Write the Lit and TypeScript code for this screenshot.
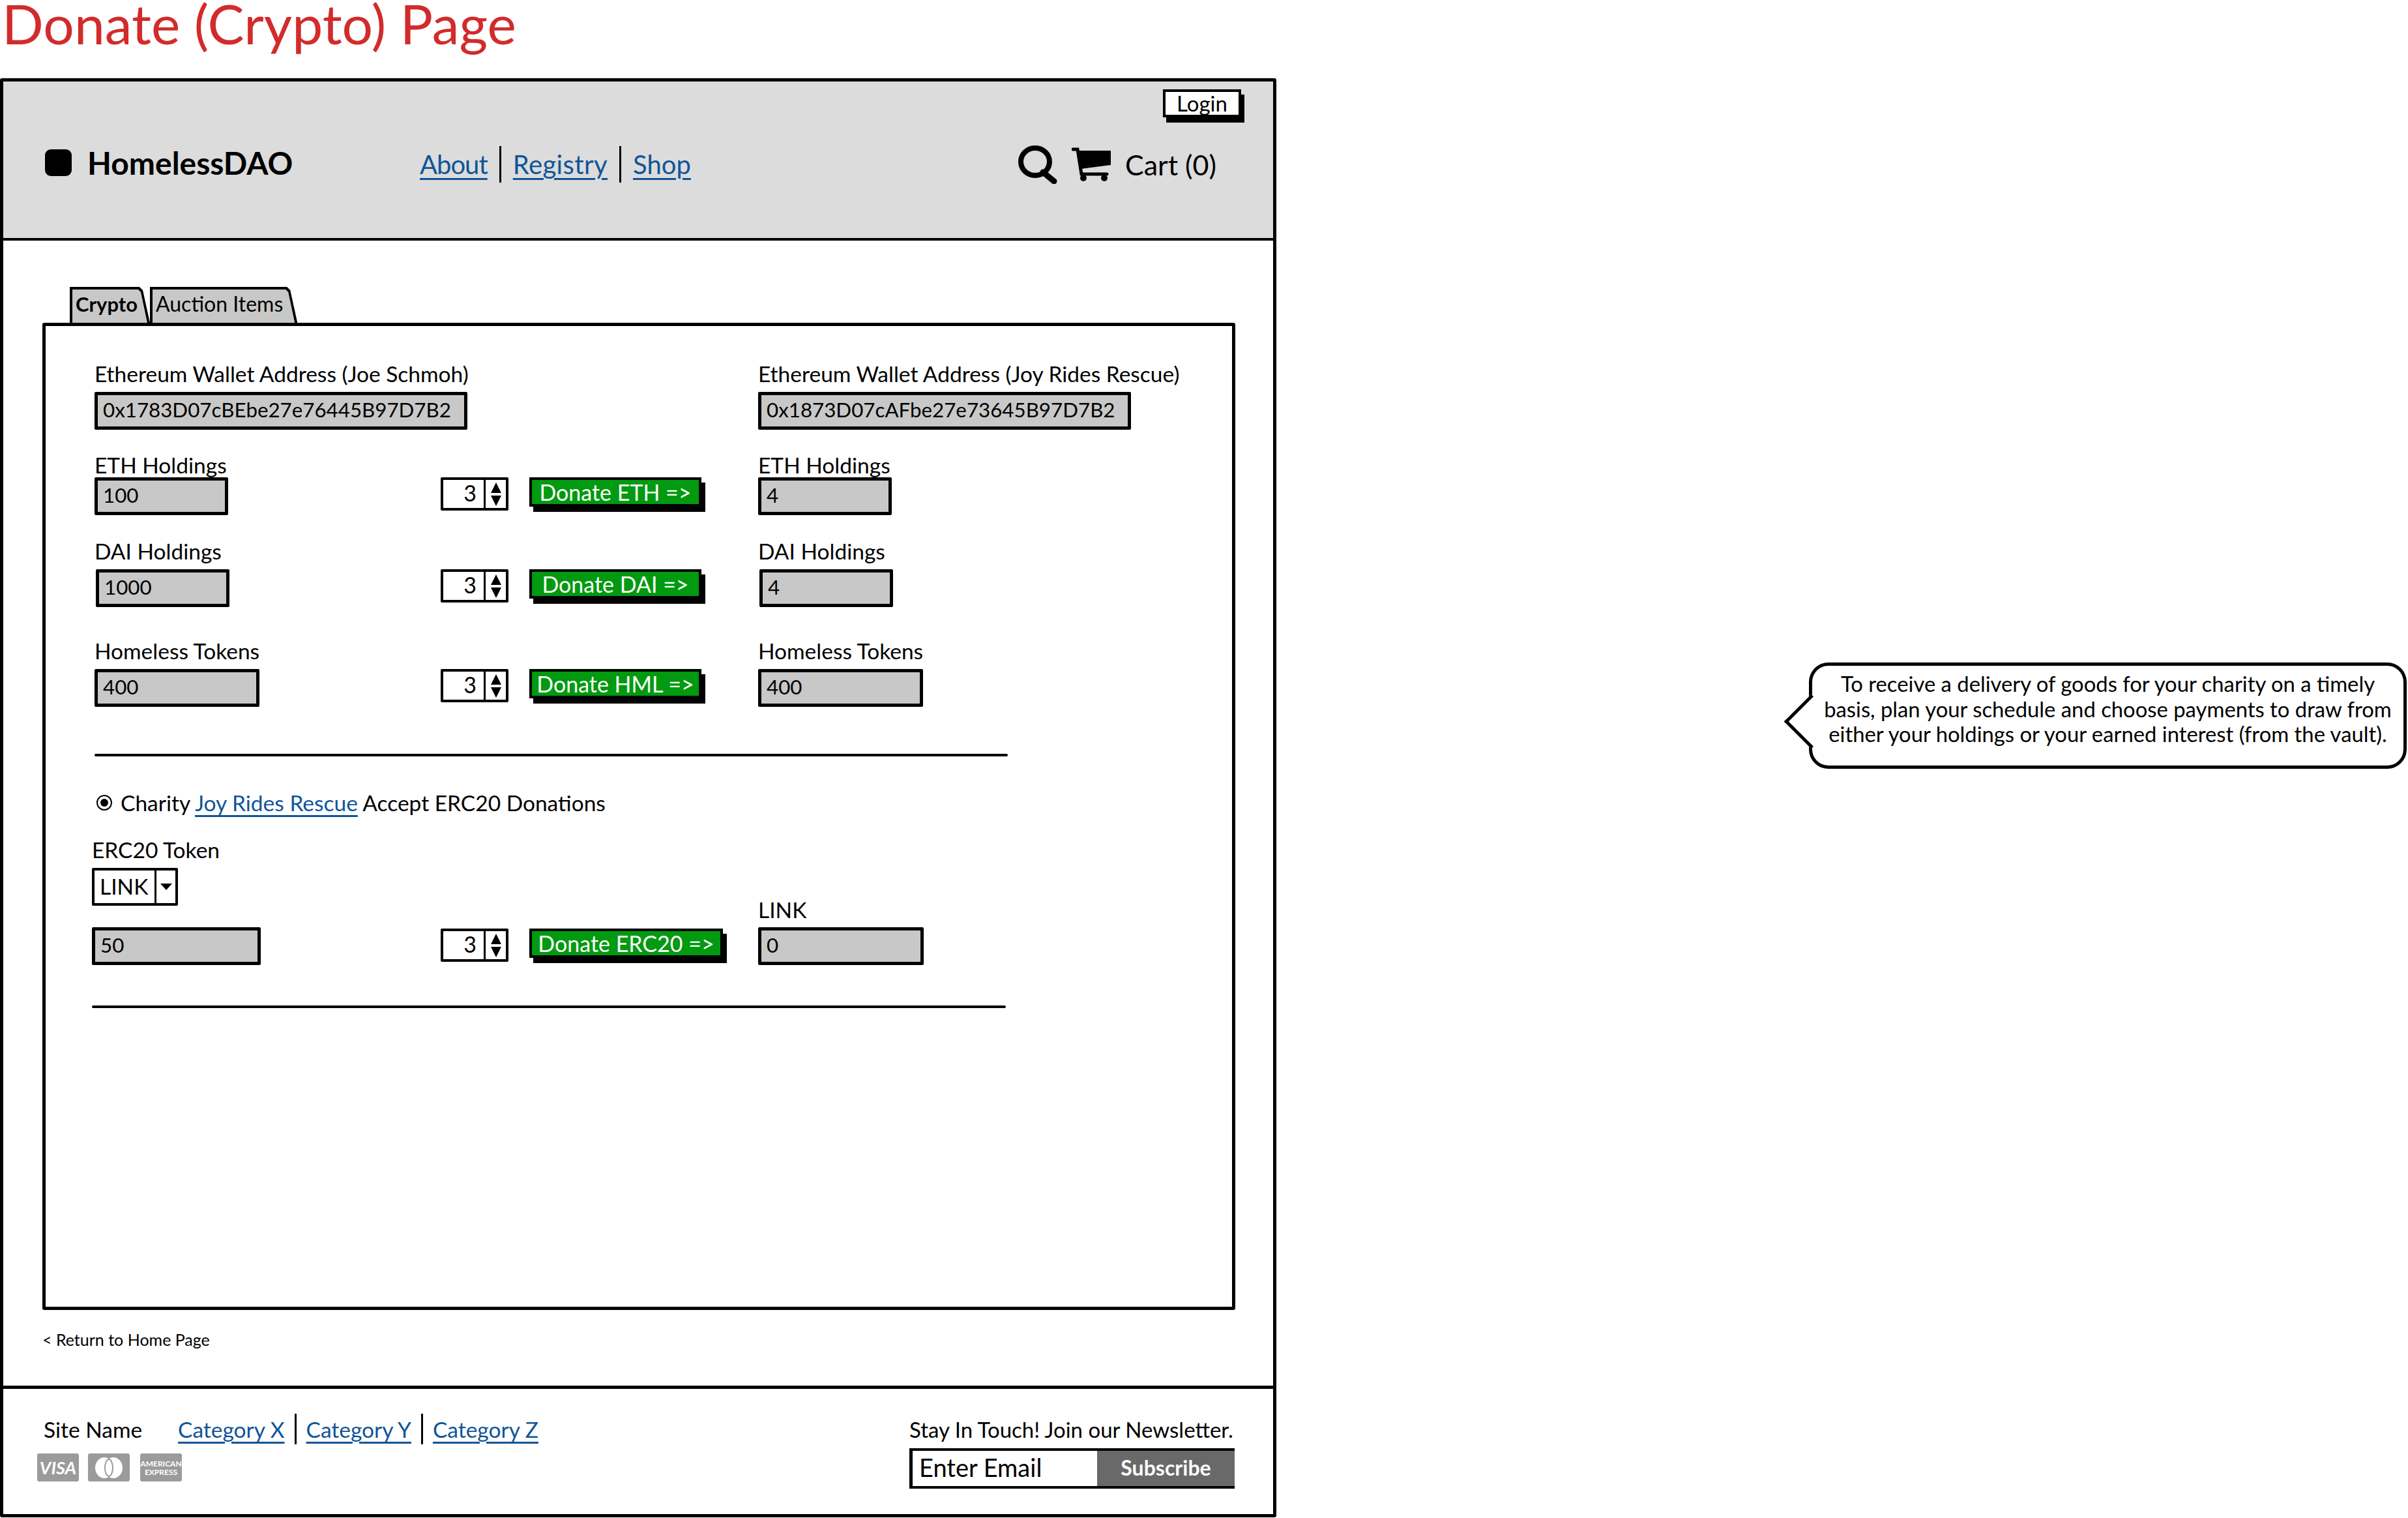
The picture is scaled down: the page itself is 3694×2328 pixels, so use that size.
import { css, html, LitElement } from "lit";
import { customElement } from "lit/decorators.js";

type Row = {
  label: string;
  value: string;
  width: number;
  shift?: number;
  button: string;
  buttonWidth: number;
  right: string;
  rightValue: string;
  tight?: boolean;
};

const ROWS: Row[] = [
  { label: "ETH Holdings", value: "100", width: 205, button: "Donate ETH =>", buttonWidth: 264, right: "ETH Holdings", rightValue: "4", tight: true },
  { label: "DAI Holdings", value: "1000", width: 205, shift: 2, button: "Donate DAI =>", buttonWidth: 264, right: "DAI Holdings", rightValue: "4" },
  { label: "Homeless Tokens", value: "400", width: 253, button: "Donate HML =>", buttonWidth: 264, right: "Homeless Tokens", rightValue: "400" },
];

@customElement("app-root")
export class AppRoot extends LitElement {
  static styles = css`
    :host {
      display: block;
      width: 3694px;
      height: 2328px;
      background: #fff;
      color: #000;
      font-family: Lato, "Liberation Sans", sans-serif;
      font-size: 33.5px;
    }
    * {
      box-sizing: border-box;
    }
    a {
      color: #0f5598;
      text-decoration: underline;
      text-decoration-thickness: 3px;
      text-underline-offset: 6px;
    }

    .title {
      margin: 0;
      height: 120px;
      padding-left: 3px;
      font-size: 84px;
      font-weight: 400;
      line-height: 72px;
      color: #d22b2b;
    }
    .stage {
      display: flex;
      align-items: flex-start;
    }
    .frame {
      display: flex;
      flex-direction: column;
      width: 1958px;
      height: 2207px;
      border: 5px solid #000;
      border-radius: 3px;
    }

    /* header */
    .header {
      display: flex;
      flex-direction: column;
      height: 244px;
      background: #dcdcdc;
      border-bottom: 4px solid #000;
    }
    .login {
      align-self: flex-end;
      width: 120px;
      height: 43px;
      margin: 12px 49px 0 0;
      border: 4px solid #000;
      background: #fff;
      box-shadow: 5px 8px 0 #000;
      font-size: 33px;
      line-height: 35px;
      text-align: center;
    }
    .bar {
      display: flex;
      align-items: center;
      height: 100px;
      margin-top: 22px;
      padding: 0 87px 0 64px;
    }
    .brand {
      display: flex;
      align-items: center;
      gap: 24px;
      width: 575px;
      margin-bottom: 6px;
      font-size: 48px;
      font-weight: 700;
    }
    .logo {
      width: 41px;
      height: 41px;
      border-radius: 9px;
      background: #000;
    }
    .nav {
      display: flex;
      align-items: center;
      gap: 18px;
      font-size: 40px;
    }
    .nav .about {
      letter-spacing: -1px;
    }
    .nav .registry {
      letter-spacing: 0.4px;
    }
    .sep {
      width: 3px;
      height: 56px;
      background: #000;
    }
    .tools {
      display: flex;
      align-items: center;
      margin-left: auto;
      font-size: 43px;
    }
    .tools svg {
      display: block;
    }
    .cart-icon {
      margin: 0 22px;
    }

    /* main */
    .main {
      flex: 1;
      padding: 71px 0 0 60px;
    }
    .tabs {
      display: flex;
      height: 55px;
      margin-left: 42px;
      font-size: 32px;
      line-height: 52px;
    }
    .tab {
      position: relative;
      padding: 0 22px 0 9px;
      background: #000;
      clip-path: polygon(0 0, calc(100% - 16px) 0, calc(100% - 11px) 5px, 100% 100%, 0 100%);
    }
    .tab::before {
      content: "";
      position: absolute;
      inset: 4px 4px 0 4px;
      background: #c8c8c8;
      clip-path: polygon(0 0, calc(100% - 14px) 0, calc(100% - 10px) 4px, 100% 100%, 0 100%);
    }
    .tab span {
      position: relative;
    }
    .tab.on {
      padding-right: 19px;
      font-size: 31px;
      font-weight: 700;
    }
    .panel {
      width: 1830px;
      height: 1514px;
      padding: 58px 0 0 75px;
      border: 5px solid #000;
      border-radius: 3px;
    }
    .grid {
      display: grid;
      grid-template-columns: 531px 136px 351px auto;
      grid-template-rows: 140px 132px 153px 173px;
    }
    .label {
      height: 30px;
      line-height: 30px;
      white-space: nowrap;
    }
    .field {
      height: 58px;
      margin-top: 13px;
      padding-left: 8px;
      border: 5px solid #000;
      border-radius: 2px;
      background: #c8c8c8;
      font-size: 31.3px;
      line-height: 44px;
      white-space: nowrap;
    }
    .tight .field {
      margin-top: 4px;
    }
    .ctl {
      padding-top: 43px;
    }
    .tight.ctl {
      padding-top: 34px;
    }
    .spinner {
      display: flex;
      width: 104px;
      height: 51px;
      border: 4px solid #000;
      border-radius: 2px;
      background: #fff;
      font-size: 34px;
      line-height: 40px;
    }
    .spinner b {
      flex: 1;
      padding-right: 11px;
      font-weight: 400;
      text-align: right;
    }
    .spinner span {
      display: flex;
      align-items: center;
      justify-content: center;
      width: 34px;
      border-left: 3px solid #000;
    }
    .go {
      height: 45px;
      border: 4px solid #000;
      background: #029a10;
      box-shadow: 6px 8px 0 #000;
      color: #fff;
      font-size: 34px;
      line-height: 37px;
      text-align: center;
      white-space: nowrap;
    }
    .rule {
      height: 4px;
      background: #000;
      border-radius: 2px;
    }
    .charity {
      display: flex;
      align-items: center;
      height: 30px;
      margin: 56px 0 0 3px;
      gap: 13px;
      white-space: pre;
    }
    .radio {
      display: flex;
      align-items: center;
      justify-content: center;
      width: 24px;
      height: 24px;
      border: 2px solid #000;
      border-radius: 50%;
    }
    .radio i {
      width: 12px;
      height: 12px;
      border-radius: 50%;
      background: #000;
    }
    .erc {
      margin-left: -4px;
    }
    .erc-label {
      margin-top: 42px;
    }
    .select {
      display: flex;
      width: 132px;
      height: 58px;
      margin-top: 13px;
      border: 4px solid #000;
      border-radius: 2px;
      line-height: 48px;
    }
    .select b {
      width: 92px;
      padding-left: 8px;
      font-weight: 400;
    }
    .select span {
      display: flex;
      flex: 1;
      align-items: center;
      justify-content: center;
      border-left: 3px solid #000;
    }
    .token {
      display: grid;
      grid-template-columns: 535px 136px 351px auto;
      margin-top: 33px;
    }
    .token .field {
      margin-top: 0;
    }
    .token .ctl {
      padding-top: 2px;
    }
    .link-col {
      margin-top: -42px;
    }
    .link-col .field {
      width: 254px;
      margin-top: 12px;
    }
    .rule.two {
      width: 1402px;
      margin-top: 62px;
    }
    .back {
      margin-top: 30px;
      font-size: 25px;
      line-height: 30px;
    }

    /* footer */
    .footer {
      display: flex;
      justify-content: space-between;
      height: 197px;
      padding: 0 59px 0 52px;
      border-top: 5px solid #000;
    }
    .links {
      display: flex;
      align-items: center;
      height: 47px;
      margin: 38px 0 0 10px;
      gap: 15px;
    }
    .site {
      width: 191px;
    }
    .links .sep {
      height: 47px;
    }
    .cards {
      display: flex;
      gap: 14px;
      margin-top: 14px;
    }
    .card {
      display: flex;
      flex-direction: column;
      align-items: center;
      justify-content: center;
      width: 64px;
      height: 43px;
      border-radius: 3px;
      background: #9b9b9b;
      color: #fff;
      font-size: 27px;
      font-style: italic;
      font-weight: 700;
      overflow: hidden;
    }
    .card.amex {
      margin-left: 2px;
      font-size: 12px;
      font-style: normal;
      line-height: 13px;
    }
    .news {
      width: 499px;
      padding-top: 47px;
    }
    .news-label {
      font-size: 33px;
      line-height: 30px;
      white-space: nowrap;
    }
    .subscribe {
      display: flex;
      height: 62px;
      margin-top: 14px;
      border: solid #000;
      border-width: 4px 0 4px 5px;
      background: #fff;
    }
    .subscribe b {
      flex: 1;
      padding-left: 10px;
      font-size: 38px;
      font-weight: 400;
      line-height: 50px;
    }
    .subscribe span {
      width: 211px;
      background: #696969;
      color: #fff;
      font-size: 32px;
      font-weight: 700;
      line-height: 52px;
      text-align: center;
    }

    /* note */
    .note {
      position: relative;
      width: 917px;
      height: 163px;
      margin: 896px 0 0 817px;
      padding-top: 9px;
      border: 5px solid #000;
      border-radius: 30px;
      background: #fff;
      font-size: 32.8px;
      line-height: 38.5px;
      text-align: center;
      white-space: nowrap;
    }
    .note::before {
      content: "";
      position: absolute;
      top: 56px;
      left: -31px;
      width: 54px;
      height: 54px;
      border: solid #000;
      border-width: 0 0 5px 5px;
      background: #fff;
      transform: rotate(45deg);
    }
    .note span {
      position: relative;
    }
  `;

  private spinner() {
    return html`<div class="spinner">
      <b>3</b>
      <span>
        <svg width="18" height="36" viewBox="0 0 18 36">
          <path d="M9 0 L17 16 H1 Z M1 20 H17 L9 36 Z" fill="#000"></path>
        </svg>
      </span>
    </div>`;
  }

  private holdingRow(r: Row) {
    const t = r.tight ? "tight" : "";
    return html`
      <div class=${t}>
        <div class="label">${r.label}</div>
        <div class="field" style="width:${r.width}px;margin-left:${r.shift ?? 0}px">${r.value}</div>
      </div>
      <div class="ctl ${t}">${this.spinner()}</div>
      <div class="ctl ${t}"><div class="go" style="width:${r.buttonWidth}px">${r.button}</div></div>
      <div class=${t}>
        <div class="label">${r.right}</div>
        <div class="field" style="width:${r.width}px;margin-left:${r.shift ?? 0}px">${r.rightValue}</div>
      </div>
    `;
  }

  render() {
    return html`
      <h1 class="title">Donate (Crypto) Page</h1>
      <div class="stage">
        <div class="frame">
          <header class="header">
            <div class="login">Login</div>
            <div class="bar">
              <div class="brand"><div class="logo"></div>HomelessDAO</div>
              <nav class="nav">
                <a class="about" href="#">About</a><div class="sep"></div>
                <a class="registry" href="#">Registry</a><div class="sep"></div>
                <a href="#">Shop</a>
              </nav>
              <div class="tools">
                <svg width="61" height="59" viewBox="0 0 61 59">
                  <ellipse cx="27" cy="25" rx="22" ry="21" fill="none" stroke="#000" stroke-width="8"></ellipse>
                  <path d="M39 41 L56 55" stroke="#000" stroke-width="9" stroke-linecap="round"></path>
                </svg>
                <svg class="cart-icon" width="60" height="52" viewBox="0 0 60 52">
                  <path d="M2 3 H9 L15 41 H54" fill="none" stroke="#000" stroke-width="5" stroke-linecap="round"></path>
                  <path d="M10 5 H60 V27 L14 33 Z" fill="#000"></path>
                  <circle cx="18" cy="47" r="5"></circle>
                  <circle cx="50" cy="47" r="5"></circle>
                </svg>
                <span>Cart (0)</span>
              </div>
            </div>
          </header>

          <main class="main">
            <div class="tabs">
              <div class="tab on"><span>Crypto</span></div>
              <div class="tab"><span>Auction Items</span></div>
            </div>
            <section class="panel">
              <div class="grid">
                <div>
                  <div class="label">Ethereum Wallet Address (Joe Schmoh)</div>
                  <div class="field" style="width:572px">0x1783D07cBEbe27e76445B97D7B2</div>
                </div>
                <div></div>
                <div></div>
                <div>
                  <div class="label">Ethereum Wallet Address (Joy Rides Rescue)</div>
                  <div class="field" style="width:572px">0x1873D07cAFbe27e73645B97D7B2</div>
                </div>
                ${ROWS.map((r) => this.holdingRow(r))}
              </div>
              <div class="rule" style="width:1401px"></div>
              <div class="charity">
                <div class="radio"><i></i></div>
                <div>Charity <a href="#">Joy Rides Rescue</a> Accept ERC20 Donations</div>
              </div>
              <div class="erc">
                <div class="label erc-label">ERC20 Token</div>
                <div class="select">
                  <b>LINK</b>
                  <span>
                    <svg width="18" height="10" viewBox="0 0 18 10"><path d="M0 0 H18 L9 10 Z" fill="#000"></path></svg>
                  </span>
                </div>
                <div class="token">
                  <div class="field" style="width:259px">50</div>
                  <div class="ctl">${this.spinner()}</div>
                  <div class="ctl"><div class="go" style="width:297px">Donate ERC20 =&gt;</div></div>
                  <div class="link-col">
                    <div class="label">LINK</div>
                    <div class="field">0</div>
                  </div>
                </div>
                <div class="rule two"></div>
              </div>
            </section>
            <div class="back">&lt; Return to Home Page</div>
          </main>

          <footer class="footer">
            <div>
              <div class="links">
                <span class="site">Site Name</span>
                <a href="#">Category X</a><div class="sep"></div>
                <a href="#">Category Y</a><div class="sep"></div>
                <a href="#">Category Z</a>
              </div>
              <div class="cards">
                <div class="card">VISA</div>
                <div class="card">
                  <svg width="44" height="36" viewBox="0 0 44 36">
                    <ellipse cx="15" cy="18" rx="14" ry="16" fill="#fff"></ellipse>
                    <ellipse cx="29" cy="18" rx="14" ry="16" fill="#fff"></ellipse>
                    <ellipse cx="22" cy="18" rx="6" ry="13" fill="none" stroke="#9b9b9b" stroke-width="2"></ellipse>
                  </svg>
                </div>
                <div class="card amex"><span>AMERICAN</span><span>EXPRESS</span></div>
              </div>
            </div>
            <div class="news">
              <div class="news-label">Stay In Touch! Join our Newsletter.</div>
              <div class="subscribe"><b>Enter Email</b><span>Subscribe</span></div>
            </div>
          </footer>
        </div>

        <aside class="note">
          <span>
            To receive a delivery of goods for your charity on a timely<br />
            basis, plan your schedule and choose payments to draw from<br />
            either your holdings or your earned interest (from the vault).
          </span>
        </aside>
      </div>
    `;
  }
}
